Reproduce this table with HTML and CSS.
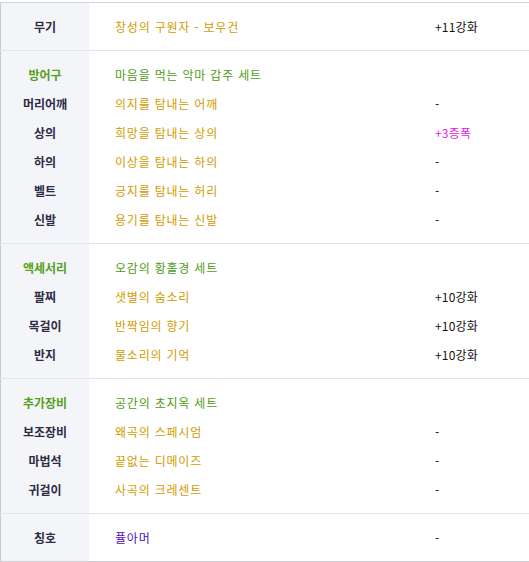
FILE: index.html
```html
<!DOCTYPE html>
<html lang="ko">
<head>
  <meta charset="UTF-8">
  <meta name="viewport" content="width=device-width, initial-scale=1.0">
  <title>장비 정보</title>
  <link rel="stylesheet" href="styles.css">
</head>
<body>
  <table class="equip">
    <tbody>
      <tr><th>무기</th><td class="name gold">창성의 구원자 - 보우건</td><td class="extra">+11강화</td></tr>
    </tbody>
    <tbody>
      <tr><th class="set">방어구</th><td class="name green">마음을 먹는 악마 갑주 세트</td><td class="extra"></td></tr>
      <tr><th>머리어깨</th><td class="name gold">의지를 탐내는 어깨</td><td class="extra">-</td></tr>
      <tr><th>상의</th><td class="name gold">희망을 탐내는 상의</td><td class="extra pink">+3증폭</td></tr>
      <tr><th>하의</th><td class="name gold">이상을 탐내는 하의</td><td class="extra">-</td></tr>
      <tr><th>벨트</th><td class="name gold">긍지를 탐내는 허리</td><td class="extra">-</td></tr>
      <tr><th>신발</th><td class="name gold">용기를 탐내는 신발</td><td class="extra">-</td></tr>
    </tbody>
    <tbody>
      <tr><th class="set">액세서리</th><td class="name green">오감의 황홀경 세트</td><td class="extra"></td></tr>
      <tr><th>팔찌</th><td class="name gold">샛별의 숨소리</td><td class="extra">+10강화</td></tr>
      <tr><th>목걸이</th><td class="name gold">반짝임의 향기</td><td class="extra">+10강화</td></tr>
      <tr><th>반지</th><td class="name gold">물소리의 기억</td><td class="extra">+10강화</td></tr>
    </tbody>
    <tbody>
      <tr><th class="set">추가장비</th><td class="name green">공간의 초지옥 세트</td><td class="extra"></td></tr>
      <tr><th>보조장비</th><td class="name gold">왜곡의 스페시엄</td><td class="extra">-</td></tr>
      <tr><th>마법석</th><td class="name gold">끝없는 디메이즈</td><td class="extra">-</td></tr>
      <tr><th>귀걸이</th><td class="name gold">사곡의 크레센트</td><td class="extra">-</td></tr>
    </tbody>
    <tbody>
      <tr><th>칭호</th><td class="name purple">퓰아머</td><td class="extra">-</td></tr>
    </tbody>
  </table>
</body>
</html>
```

FILE: styles.css
```css
body {
  margin: 0;
  padding-top: 2px;
  background: #fff;
  font-family: "Noto Sans CJK KR", "Noto Sans", sans-serif;
  font-size: 12px;
}

.equip {
  width: 529px;
  border-collapse: collapse;
  border-top: 1px solid #d2d2de;
  border-left: 1px solid #c8c8d6;
  border-bottom: 1px solid #cfcfd4;
}

.equip tbody + tbody {
  border-top: 1px solid #e4e4ea;
}

.equip th,
.equip td {
  height: 29px;
  padding: 0;
  line-height: 16px;
  vertical-align: middle;
  white-space: nowrap;
}

.equip tr:first-child th,
.equip tr:first-child td {
  padding-top: 9px;
}

.equip tr:last-child th,
.equip tr:last-child td {
  padding-bottom: 9px;
}

.equip th {
  width: 88px;
  background: #f4f5f9;
  color: #2c2c44;
  font-weight: bold;
  text-align: center;
}

.equip th.set {
  color: #55a01a;
}

.name {
  width: 320px;
  padding-left: 26px !important;
  letter-spacing: 0.8px;
}

.extra {
  color: #111;
  letter-spacing: 0.2px;
}

.gold {
  color: #d19c00;
}

.green {
  color: #4f9b16;
}

.purple {
  color: #4a10b8;
}

.pink {
  color: #e020e0;
}
```
